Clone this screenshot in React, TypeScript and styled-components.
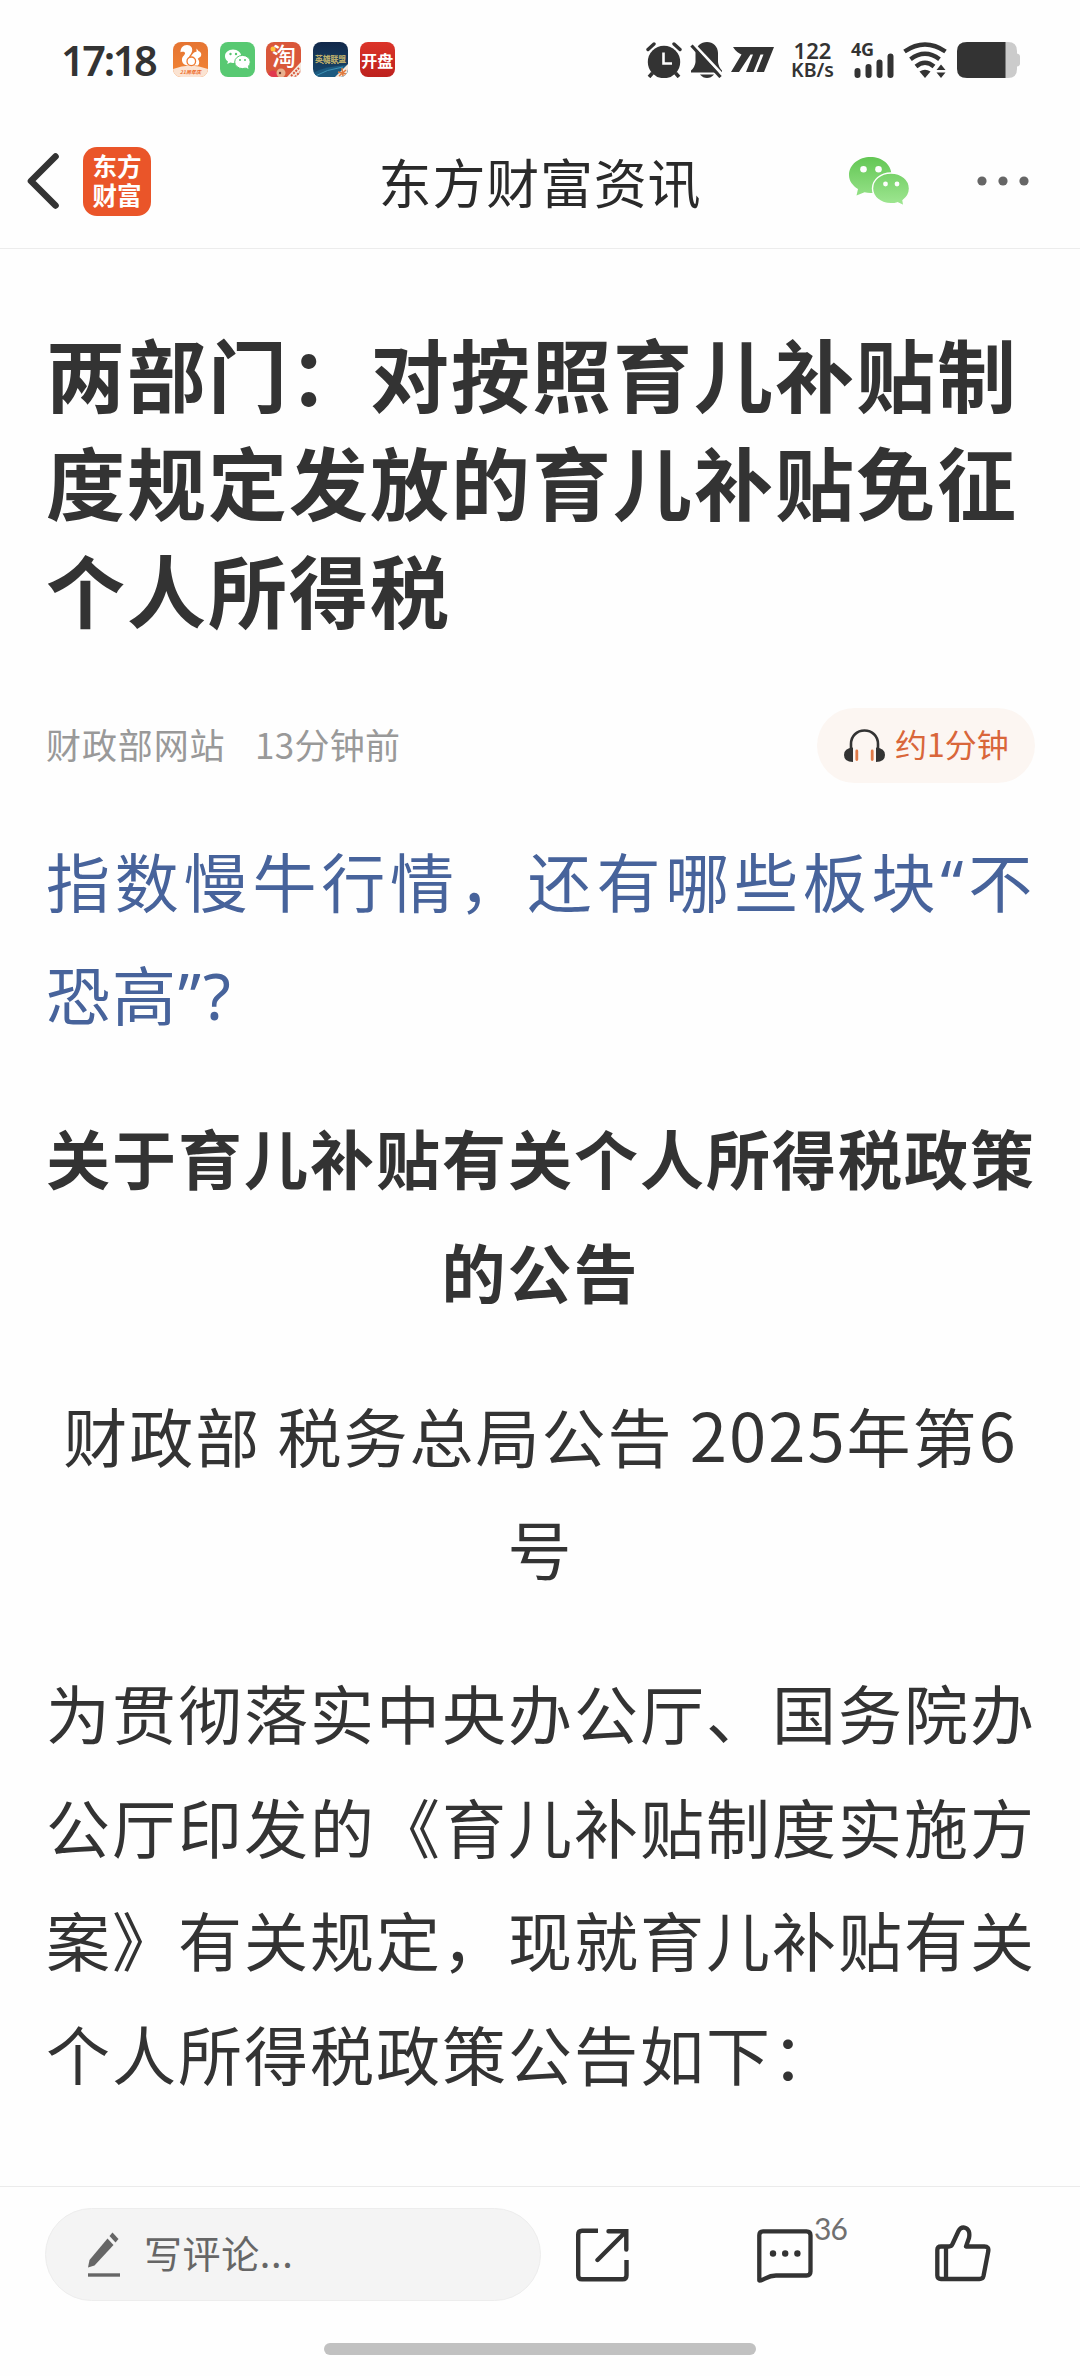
import React from "react";
import styled, { createGlobalStyle } from "styled-components";

const GlobalStyle = createGlobalStyle`
  body { margin: 0; background: #fefefe; }
  * { box-sizing: border-box; }
`;

const Screen = styled.div`
  width: 1080px;
  height: 2376px;
  display: flex;
  flex-direction: column;
  overflow: hidden;
  background: #fefefe;
  color: #333;
  font-family: "Noto Sans CJK SC", sans-serif;
`;

const StatusBar = styled.header`
  flex: none;
  height: 119px;
  padding: 0 60px 0 61px;
  display: flex;
  align-items: center;
  justify-content: space-between;
`;

const StatusGroup = styled.div`
  display: flex;
  align-items: center;
`;

const Clock = styled.span`
  width: 112px;
  font: 600 41.5px/60px "Noto Sans", sans-serif;
  letter-spacing: -2.4px;
  white-space: nowrap;
`;

const AppIcons = styled.div`
  display: flex;
  gap: 11.7px;
`;

const AppIcon = styled.div<{ $bg: string }>`
  width: 35px;
  height: 35px;
  border-radius: 8px;
  overflow: hidden;
  background: ${(p) => p.$bg};
  color: #fff;
  display: flex;
  align-items: center;
  justify-content: center;
`;

const AppText = styled.span`
  font-size: 16px;
  line-height: 24px;
  font-weight: 700;
  white-space: nowrap;
`;

const Glyph = styled.svg<{ $ml?: number; $mt?: number }>`
  display: block;
  flex: none;
  margin-left: ${(p) => p.$ml ?? 0}px;
  margin-top: ${(p) => p.$mt ?? 0}px;
`;

const NetSpeed = styled.div`
  width: 43px;
  margin-left: 17px;
  display: flex;
  flex-direction: column;
  align-items: center;
  font-family: "Noto Sans", sans-serif;
  font-weight: 600;
  font-size: 19.5px;
  line-height: 19px;
  white-space: nowrap;
`;

const SpeedValue = styled.span`
  font-size: 22px;
  line-height: 20px;
`;

const Signal = styled.div`
  position: relative;
  margin-left: 18px;
  width: 42px;
  height: 36px;
`;

const SignalLabel = styled.span`
  position: absolute;
  left: -1px;
  top: -4px;
  font: 700 18px/22px "Noto Sans", sans-serif;
  letter-spacing: -0.3px;
`;

const NavBar = styled.nav`
  flex: none;
  height: 130px;
  padding-bottom: 5px;
  border-bottom: 1px solid #ececec;
  display: grid;
  grid-template-columns: 300px 1fr 300px;
  align-items: center;
`;

const NavLeft = styled.div`
  display: flex;
  align-items: center;
  padding-left: 26px;
`;

const NavRight = styled.div`
  display: flex;
  align-items: center;
  padding-left: 69px;
`;

const NavTitle = styled.h2`
  margin: 0;
  text-align: center;
  font-size: 53px;
  font-weight: 400;
  line-height: 76px;
  letter-spacing: 0.8px;
  color: #2a2a2a;
  white-space: nowrap;
`;

const BrandLogo = styled.div`
  width: 68px;
  height: 69px;
  margin-left: 24px;
  padding-bottom: 3px;
  border-radius: 14px;
  background: #ea5529;
  color: #fff;
  display: flex;
  flex-direction: column;
  align-items: center;
  justify-content: center;
  font-size: 24.5px;
  font-weight: 700;
  line-height: 29px;
`;

const Article = styled.main`
  flex: 1;
  min-height: 0;
  padding: 70px 45px 0 46px;
`;

const Headline = styled.h1`
  margin: 0;
  font-size: 79px;
  font-weight: 700;
  line-height: 108px;
  letter-spacing: 2px;
`;

const Line = styled.span<{ $spacing?: number }>`
  display: block;
  white-space: nowrap;
  ${(p) => (p.$spacing !== undefined ? `letter-spacing: ${p.$spacing}px;` : "")}
`;

const Latin = styled.span`
  font-family: "Noto Sans", sans-serif;
  line-height: 1;
`;

const Digits = styled.span`
  font-size: 67px;
  line-height: 1;
`;

const Meta = styled.div`
  margin-top: 65px;
  height: 75px;
  display: flex;
  align-items: center;
  color: #999;
  font-size: 35px;
  letter-spacing: 0.9px;
`;

const Source = styled.span`
  width: 209px;
  padding-bottom: 5px;
  white-space: nowrap;
`;

const Published = styled.span`
  flex: 1;
  padding-bottom: 5px;
  letter-spacing: 0.3px;
`;

const ListenPill = styled.button`
  width: 218px;
  height: 75px;
  padding: 0 0 0 27px;
  border: 0;
  border-radius: 38px;
  background: #fcf6f2;
  display: flex;
  align-items: center;
  gap: 10px;
  color: #d9663a;
  font: 400 32px/48px "Noto Sans CJK SC", sans-serif;
  white-space: nowrap;
`;

const PillLabel = styled.span`
  padding-bottom: 5px;
`;

const Paragraph = styled.p<{ $tone?: string; $bold?: boolean; $center?: boolean }>`
  margin: 0 0 50.4px;
  font-size: 64px;
  line-height: 113.6px;
  letter-spacing: 2px;
  color: ${(p) => p.$tone ?? "#333"};
  font-weight: ${(p) => (p.$bold ? 700 : 400)};
  text-align: ${(p) => (p.$center ? "center" : "left")};
`;

const Body = styled.div`
  padding-top: 39.5px;
`;

const BottomBar = styled.footer`
  flex: none;
  height: 190px;
  border-top: 1px solid #ebebeb;
  padding: 21px 0 21px 45px;
  display: flex;
  flex-direction: column;
  align-items: flex-start;
`;

const Actions = styled.div`
  display: flex;
  align-items: center;
`;

const CommentField = styled.div`
  width: 496px;
  height: 93px;
  padding-left: 42px;
  border: 1px solid #ededed;
  border-radius: 47px;
  background: #f4f4f4;
  display: flex;
  align-items: center;
  gap: 23px;
  color: #666;
  font-size: 38px;
  line-height: 56px;
  letter-spacing: 0.6px;
`;

const Placeholder = styled.span`
  padding-bottom: 5px;
`;

const Count = styled.span`
  align-self: flex-start;
  width: 122px;
  padding: 0 0 0 1px;
  font: 400 30px/40px Lato, sans-serif;
  letter-spacing: -0.8px;
  color: #707070;
`;

const HomeIndicator = styled.div`
  width: 432px;
  height: 12px;
  margin: 42px 0 0 279px;
  border-radius: 6px;
  background: #c1c1c1;
`;

const WeChatMark = () => (
  <svg width="35" height="35" viewBox="0 0 35 35">
    <path d="M13 7.500c-4.600 0-8 3-8 6.700 0 2.200 1.100 4 3 5.300l-.8 2.600 3-1.600c.9.300 1.900.4 2.800.4 5 0 8.200-3 8.200-6.700S17.600 7.500 13 7.500z" fill="#fff" />
    <ellipse cx="22.500" cy="20" rx="7.800" ry="6.600" fill="#fff" stroke="#55c66e" strokeWidth="1" />
    <path d="M25 25l3.500 2-.8-3.500z" fill="#fff" />
    <g fill="#55c66e">
      <circle cx="10.500" cy="12" r="1.200" /><circle cx="16" cy="12" r="1.200" />
      <circle cx="20" cy="18" r="1" /><circle cx="25" cy="18" r="1" />
    </g>
  </svg>
);

const Squirrel = () => (
  <svg width="35" height="35" viewBox="0 0 35 35">
    <path d="M0 27Q17 20 35 27V35H0z" fill="#fbe3d2" />
    <path d="M17.500 23.500c-6 .5-9-2.500-8.500-6.500.4-3 3.300-4 3-6-.4-1.500-2.300-1.500-4.500-.8C7.500 6 10 3 14 3c4 0 6 3 5 6.500-.8 3-3.500 4.500-3 7.500z" fill="#fff" />
    <path d="M17.500 15c2-3.500 4-5.200 6-5.200V6.500l2.200 2.700c2.300.6 3.300 3.300 2 5.300l-3 2.200c2 2.300 2 5 .3 6.800h-8.500z" fill="#fff" />
    <circle cx="18.300" cy="19.300" r="4.300" fill="#fff" stroke="#ee7a30" strokeWidth="1.300" />
    <text x="17.500" y="31.500" textAnchor="middle" fontSize="5" fontWeight="700" fontStyle="italic" fill="#ee6a28">21周年庆</text>
  </svg>
);

const Taobao = () => (
  <svg width="35" height="35" viewBox="0 0 35 35">
    <circle cx="7" cy="7" r="2.500" fill="#ffc23a" />
    <text x="18" y="23" textAnchor="middle" fontSize="24" fontWeight="500" fill="#fff">淘</text>
    <circle cx="7" cy="33" r="4.500" fill="#e0394f" />
    <circle cx="15" cy="31" r="4.500" fill="#e8b08e" />
    <circle cx="14" cy="31" r="1.200" fill="#6d3a2a" />
    <path d="M21 35L35 20v15z" fill="#f6eadf" />
    <path d="M25 34l8-8M29 35l5-5" stroke="#d9553a" strokeWidth="2" strokeDasharray="2 1.200" />
  </svg>
);

const League = () => (
  <svg width="35" height="35" viewBox="0 0 35 35">
    <path d="M0 31Q12 24 35 23V35H0z" fill="#1c5a80" />
    <path d="M0 35Q14 27 30 25" stroke="#3f93b5" fill="none" />
    <text x="17.500" y="19.500" textAnchor="middle" fontSize="7.800" fontWeight="900" fill="#b9ac6c">英雄联盟</text>
    <path d="M9 21.500h17" stroke="#9b9160" strokeWidth="1" strokeDasharray="2 1" />
    <path d="M22 35l13-13v13z" fill="#f6e8dc" />
    <path d="M25 30l8 2M29 26l1 8M26 34l7-6" stroke="#e07a3e" strokeWidth="1.500" />
  </svg>
);

const AlarmIcon = () => (
  <Glyph width="36" height="36" viewBox="0 0 36 36">
    <circle cx="18" cy="20" r="16.200" fill="#333" />
    <path d="M2 7.500L8 2M34 7.500L28 2" stroke="#333" strokeWidth="3.400" strokeLinecap="round" />
    <path d="M6.500 31L3 35M29.500 31L33 35" stroke="#333" strokeWidth="3.600" />
    <path d="M17.500 10.500V21.500H26" stroke="#fefefe" strokeWidth="2.600" fill="none" />
  </Glyph>
);

const MutedIcon = () => (
  <Glyph $ml={8} width="33" height="36" viewBox="0 0 33 36">
    <path d="M17 0C23 0 28 4.500 28 11V20Q28.500 25 32 28.500V30.500H1V28.500Q5 25 5.500 20V11C5.500 4.500 11 0 17 0z" fill="#333" />
    <path d="M10 32.500H24Q21 36 17 36T10 32.500z" fill="#333" />
    <path d="M3 1.500L33 33.500" stroke="#fefefe" strokeWidth="3" />
    <path d="M1.500 3.500L30.500 35" stroke="#333" strokeWidth="3.200" />
  </Glyph>
);

const MIcon = () => (
  <Glyph $ml={8} width="43" height="25" viewBox="0 0 43 25">
    <path d="M2 0H43L33 25H25.500L32.500 7.500H29.500L22.500 25H15L22 7.500H19.500L8 25H0L10.500 7.500Q5.500 5.500 2 0z" fill="#333" />
  </Glyph>
);

const WifiIcon = () => (
  <Glyph $ml={9} width="45" height="36" viewBox="0 0 45 36">
    <g fill="none" stroke="#333" strokeWidth="4.400">
      <path d="M1.500 9.500Q22 -4.500 42.500 9.500" />
      <path d="M7.500 17.200Q22 6.500 36.500 17.200" />
      <path d="M13 24.500Q22 17 31 24.500" />
    </g>
    <path d="M16.500 29.500Q22 26 27.500 29.500L22 36z" fill="#333" />
    <path d="M33.500 28L38 22.500 42.500 28zM33.500 30.500L38 36 42.500 30.500z" fill="#333" />
  </Glyph>
);

const BatteryIcon = () => (
  <Glyph $ml={9} width="63" height="36" viewBox="0 0 63 36">
    <path d="M48 0h3q9 0 9 9v2.500q3 .5 3 3v7q0 2.500-3 3V27q0 9-9 9h-3z" fill="#cbcbcb" />
    <path d="M10 0H48.500V36H10Q0 36 0 27V9Q0 0 10 0z" fill="#333" />
  </Glyph>
);

const WeChatShare = () => (
  <svg width="62" height="50" viewBox="0 0 62 50">
    <defs>
      <linearGradient id="wx" x1="0" y1="0" x2="0" y2="50" gradientUnits="userSpaceOnUse">
        <stop offset="0" stopColor="#62c653" />
        <stop offset="1" stopColor="#a0e793" />
      </linearGradient>
    </defs>
    <path d="M21.500 1C33 1 42.500 8.500 42.500 19S33 37 21.500 37q-3 0-6-.7L7.500 39.500 9 33C3.500 29.500 0 25 0 19 0 8.500 10 1 21.500 1z" fill="url(#wx)" />
    <path d="M42 17c10.500 0 18.500 7 18.500 15.500 0 5-2.500 9-6.500 12l1 5.500-6.500-3.200q-3 .9-6.500.9c-10.500 0-18.500-6.700-18.500-15.200S31.500 17 42 17z" fill="url(#wx)" stroke="#fefefe" strokeWidth="1.400" />
    <g fill="#fefefe">
      <circle cx="14.500" cy="13.200" r="3.300" /><circle cx="29.500" cy="13.200" r="3.300" />
      <circle cx="36.500" cy="28" r="2.400" /><circle cx="48" cy="28" r="2.400" />
    </g>
  </svg>
);

const Headphones = () => (
  <svg width="41" height="34" viewBox="0 0 41 34">
    <path d="M7 20V15C7 7 13 1.500 20.500 1.500S34 7 34 15V20" fill="none" stroke="#333" strokeWidth="2.600" />
    <path d="M9 18.500V33Q0 33 0 26Q0 19 9 18.500zM32 18.500V33Q41 33 41 26Q41 19 32 18.500z" fill="#333" />
    <path d="M12.800 22V30.500M28.200 22V30.500" stroke="#df7a48" strokeWidth="2.800" strokeLinecap="round" />
  </svg>
);

const Pencil = () => (
  <svg width="33" height="45" viewBox="0 0 33 45">
    <path d="M19.500 6.500L25.500 13 6.500 33.500 0 35.500 1.500 28z" fill="#666" />
    <path d="M21.500 4L24.500 0.500 30.500 7 27.500 10.500z" fill="#666" />
    <path d="M0 43H32" stroke="#666" strokeWidth="3.400" />
  </svg>
);

const ShareIcon = () => (
  <Glyph $ml={35} width="53" height="54" viewBox="0 0 53 54" fill="none" stroke="#333" strokeWidth="4.400">
    <path d="M22 2.700H6Q2.200 2.700 2.200 6.500V47.500Q2.200 51.300 6 51.300H46.500Q50.500 51.300 50.500 47.500V32" />
    <path d="M32.500 3.200H50.300V21.500M50 3.500L21.500 32" strokeLinecap="round" />
  </Glyph>
);

const CommentIcon = () => (
  <Glyph $ml={128} $mt={3} width="56" height="54" viewBox="0 0 56 54">
    <path d="M6 2.300H49.500Q53.500 2.300 53.500 6.300V42.500Q53.500 46.500 49.500 46.500H19C10 46.500 7 51.500 2.300 51.500V6.300Q2.300 2.300 6 2.300z" fill="none" stroke="#333" strokeWidth="4.300" strokeLinejoin="round" />
    <g fill="#333"><circle cx="16" cy="24.500" r="3.200" /><circle cx="28.200" cy="24.500" r="3.200" /><circle cx="40.400" cy="24.500" r="3.200" /></g>
  </Glyph>
);

const LikeIcon = () => (
  <Glyph $mt={-2} width="56" height="57" viewBox="0 0 56 57" fill="none" stroke="#333" strokeWidth="4.300" strokeLinejoin="round">
    <path d="M6 21.500H14Q16.500 21.500 17.500 19L23.500 6Q25.500 2 29.500 2.600C34 3.500 35 8 34 13L31 21.500H49.500Q54 21.500 53.300 26L48.500 51Q47.800 54 44.500 54H6Q2.300 54 2.300 50.500V25Q2.300 21.500 6 21.500z" />
    <path d="M11 22V54" />
  </Glyph>
);

export default function App() {
  return (
    <Screen>
      <GlobalStyle />
      <StatusBar>
        <StatusGroup>
          <Clock>17:18</Clock>
          <AppIcons>
            <AppIcon $bg="linear-gradient(#e57432, #f28535)"><Squirrel /></AppIcon>
            <AppIcon $bg="#58c972"><WeChatMark /></AppIcon>
            <AppIcon $bg="#d9573a"><Taobao /></AppIcon>
            <AppIcon $bg="linear-gradient(#12284a, #17496c)"><League /></AppIcon>
            <AppIcon $bg="linear-gradient(#dc3429, #bd211e)"><AppText>开盘</AppText></AppIcon>
          </AppIcons>
        </StatusGroup>
        <StatusGroup>
          <AlarmIcon />
          <MutedIcon />
          <MIcon />
          <NetSpeed>
            <SpeedValue>122</SpeedValue>
            <span>KB/s</span>
          </NetSpeed>
          <Signal>
            <SignalLabel>4G</SignalLabel>
            <svg width="42" height="36" viewBox="0 0 42 36">
              <path d="M5.500 29V33M16.500 25V33M27.500 20.500V33M38.500 14.500V33" stroke="#333" strokeWidth="6" strokeLinecap="round" />
            </svg>
          </Signal>
          <WifiIcon />
          <BatteryIcon />
        </StatusGroup>
      </StatusBar>

      <NavBar>
        <NavLeft>
          <svg width="33" height="56" viewBox="0 0 33 56">
            <path d="M29.500 3.500L5 28L29.500 52.500" fill="none" stroke="#333" strokeWidth="6.600" strokeLinecap="round" strokeLinejoin="round" />
          </svg>
          <BrandLogo><span>东方</span><span>财富</span></BrandLogo>
        </NavLeft>
        <NavTitle>东方财富资讯</NavTitle>
        <NavRight>
          <WeChatShare />
          <Glyph $ml={66} width="54" height="10" viewBox="0 0 54 10" fill="#666">
            <circle cx="5" cy="5" r="4.600" /><circle cx="26" cy="5" r="4.600" /><circle cx="47" cy="5" r="4.600" />
          </Glyph>
        </NavRight>
      </NavBar>

      <Article>
        <Headline>
          <Line>两部门：对按照育儿补贴制</Line>
          <Line>度规定发放的育儿补贴免征</Line>
          <Line>个人所得税</Line>
        </Headline>
        <Meta>
          <Source>财政部网站</Source>
          <Published>13分钟前</Published>
          <ListenPill><Headphones /><PillLabel>约1分钟</PillLabel></ListenPill>
        </Meta>
        <Body>
          <Paragraph $tone="#47639b">
            <Line $spacing={4.8}>指数慢牛行情，还有哪些板块<Latin>“</Latin>不</Line>
            <Line>恐高<Latin>”?</Latin></Line>
          </Paragraph>
          <Paragraph $bold $center>
            <Line>关于育儿补贴有关个人所得税政策</Line>
            <Line>的公告</Line>
          </Paragraph>
          <Paragraph $center>
            <Line>财政部 税务总局公告 <Digits>2025</Digits>年第<Digits>6</Digits></Line>
            <Line>号</Line>
          </Paragraph>
          <Paragraph>
            <Line>为贯彻落实中央办公厅、国务院办</Line>
            <Line>公厅印发的《育儿补贴制度实施方</Line>
            <Line>案》有关规定，现就育儿补贴有关</Line>
            <Line>个人所得税政策公告如下：</Line>
          </Paragraph>
        </Body>
      </Article>

      <BottomBar>
        <Actions>
          <CommentField><Pencil /><Placeholder>写评论...</Placeholder></CommentField>
          <ShareIcon />
          <CommentIcon />
          <Count>36</Count>
          <LikeIcon />
        </Actions>
        <HomeIndicator />
      </BottomBar>
    </Screen>
  );
}
